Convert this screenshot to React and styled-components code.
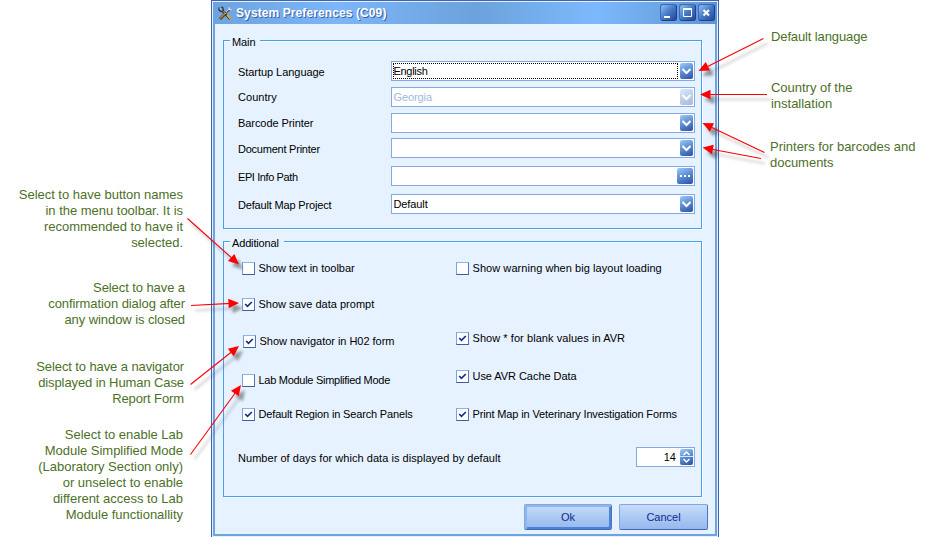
import React from "react";
import styled, { createGlobalStyle } from "styled-components";

const GlobalStyle = createGlobalStyle`
  body { margin: 0; background: #fff; }
  * { box-sizing: border-box; }
`;

const Page = styled.div`
  position: relative;
  display: flex;
  width: 937px;
  height: 537px;
  overflow: hidden;
  font-family: "Liberation Sans", Arial, sans-serif;
`;

const NoteColumn = styled.aside`
  display: flex;
  flex-direction: column;
  flex: none;
  width: ${(p) => p.$width}px;
  padding: ${(p) => p.$padding};
  align-items: ${(p) => (p.$end ? "flex-end" : "flex-start")};
  text-align: ${(p) => (p.$end ? "right" : "left")};
`;

const Note = styled.p`
  margin: ${(p) => p.$margin || "0"};
  font-size: 13px;
  line-height: 16px;
  letter-spacing: ${(p) => p.$spacing || "-0.02px"};
  color: #4d7028;
  white-space: nowrap;
`;

const Dialog = styled.main`
  display: flex;
  flex-direction: column;
  flex: none;
  width: 508px;
  height: 538px;
  border: 1px solid #3c64b4;
  background: #e4f0fe;
  padding: 1px;
`;

const Frame = styled.div`
  flex: 1;
  display: flex;
  flex-direction: column;
  padding: 0 2px 2px 2px;
  background: #6ea3de;
`;

const TitleBar = styled.header`
  display: flex;
  align-items: center;
  flex: none;
  height: 22px;
  padding: 0 2px 0 5px;
  margin: 0 -2px;
  background: linear-gradient(90deg, #6da3df 0, #7cb6f9 25%, #6ca2dc 52%, #7cb9fc 76%, #5f94d3 100%);
`;

const Title = styled.h1`
  flex: 1;
  margin: 0 0 0 3px;
  font-size: 12px;
  line-height: 20px;
  font-weight: bold;
  color: #fff;
  text-shadow: 1px 1px 0 #3a62a8;
  letter-spacing: 0.1px;
`;

const WindowButton = styled.button`
  display: flex;
  width: 17px;
  height: 17px;
  margin: 0 0 1px 2px;
  padding: 0;
  border: 1px solid #3c68b4;
  border-bottom-color: #1d3f94;
  border-right-color: #1d3f94;
  border-radius: 3px;
  background: linear-gradient(135deg, #8fc0f5, #4679c4 50%, #24489c);
`;

const Body = styled.div`
  flex: 1;
  background: #e6f2ff;
  padding: 16px 13px 0 8px;
  width: 500px;
`;

const Group = styled.section`
  width: 479px;
  height: ${(p) => p.$height}px;
  margin-bottom: 12px;
  border: 1px solid #46a0f0;
  box-shadow: 1px 1px 0 #fff, inset 0 1px 0 #f6faff;
  padding: 0 6px 0 14px;
`;

const Legend = styled.h2`
  width: ${(p) => p.$width}px;
  height: 14px;
  margin: -6px 0 0 -8px;
  padding-left: 2px;
  background: #e6f2ff;
  font-size: 11px;
  line-height: 15px;
  font-weight: normal;
  letter-spacing: ${(p) => p.$spacing};
  color: #000;
`;

const FieldRow = styled.div`
  display: flex;
  justify-content: space-between;
  height: 20px;
  margin-top: ${(p) => p.$gap}px;
`;

const Label = styled.span`
  font-size: 11px;
  line-height: ${(p) => p.$line || 22}px;
  letter-spacing: ${(p) => p.$spacing || 0}px;
  color: #000;
  white-space: pre;
`;

const Field = styled.div`
  display: flex;
  width: ${(p) => p.$width || 304}px;
  height: 20px;
  padding: 1px;
  border: 1px solid #84aae6;
  background: #fff;
`;

const Value = styled.span`
  flex: 1;
  height: 16px;
  margin-right: 2px;
  padding-right: ${(p) => (p.$right ? 1 : 0)}px;
  border: 1px ${(p) => (p.$focus ? "dotted #000" : "solid transparent")};
  font-size: 11px;
  line-height: 15px;
  letter-spacing: ${(p) => p.$spacing || 0}px;
  text-indent: -0.5px;
  text-align: ${(p) => (p.$right ? "right" : "left")};
  color: ${(p) => (p.$muted ? "#9db9e0" : "#000")};
`;

const FieldButton = styled.button`
  display: flex;
  flex: none;
  width: ${(p) => p.$width || 13}px;
  height: 16px;
  padding: 0;
  border: 0;
  border-radius: 2px;
  opacity: ${(p) => (p.$muted ? 0.4 : 1)};
  background: linear-gradient(155deg, #9ccbf8, #5a8bd0 50%, #2c50a4);
`;

const Checks = styled.div`
  display: flex;
  height: 158px;
  margin: 12px 0 0 4px;
`;

const CheckColumn = styled.div`
  width: 214px;
`;

const Check = styled.label`
  display: flex;
  height: 13px;
  margin: ${(p) => p.$gap || 0}px 0 0 ${(p) => p.$indent || 0}px;
`;

const Box = styled.span`
  display: flex;
  flex: none;
  width: 13px;
  height: 13px;
  margin-right: 3.5px;
  border: 1px solid;
  border-color: #8cb4e8 #5474bc #3c5ca8 #7aa2dc;
  background: #fff;
`;

const Footer = styled.footer`
  display: flex;
  justify-content: flex-end;
  gap: 7px;
  margin: -5px -6px 0 0;
`;

const PushButton = styled.button`
  width: ${(p) => p.$width}px;
  height: 26px;
  padding: 0;
  border: 1px solid #6e90d0;
  border-color: #80a8e4 #4c74c0 #4068b8 #80a8e4;
  border-radius: 2px;
  background: linear-gradient(#c6dcfa, #94b8ee);
  box-shadow: ${(p) => (p.$primary ? "inset 2px 2px 0 #8cb6f0, inset -2px -2px 0 #4a84d6" : "none")};
  font: 11px/24px "Liberation Sans", Arial, sans-serif;
  letter-spacing: 0;
  color: #10288c;
`;

const Overlay = styled.svg`
  position: absolute;
  inset: 0;
  pointer-events: none;
`;

const ToolsIcon = () => (
  <svg width="15" height="15" viewBox="0 0 15 15" fill="none">
    <path d="M4 4.5L12 13" stroke="#1c2026" strokeWidth="2.2" />
    <path d="M1 1.5V4L3 5.5L5.2 4.5L5 2L3.4 .8" stroke="#2a2d33" strokeWidth="1.3" />
    <path d="M1.8 2.2L4 4.5" stroke="#c8ccd0" strokeWidth="1" />
    <path d="M2 13L8 7" stroke="#593d12" strokeWidth="2.8" />
    <path d="M2.2 12.2L7.4 7" stroke="#b08432" strokeWidth="1.4" />
    <path d="M8.4 6.2L12 3" stroke="#4a4a4a" strokeWidth="1.9" />
    <path d="M8.2 5.8L12 2.2M11 1.2V3.6H13.6" stroke="#e4e7e8" strokeWidth="1" />
    <path d="M9 9L12.6 12.8" stroke="#f0a820" strokeWidth="2" />
    <path d="M4.5 4.8L8 8.3" stroke="#b9c0c4" strokeWidth=".8" />
  </svg>
);

const Glyph = ({ kind }) => (
  <svg width="15" height="15" viewBox="0 0 15 15" fill="none" stroke="#fff">
    {kind === "min" && <path d="M3 12h6" strokeWidth="2" />}
    {kind === "max" && <path d="M3.5 4v7.5h8V4M3 4h9" strokeWidth="1" />}
    {kind === "max" && <path d="M3 4h9" strokeWidth="2" />}
    {kind === "close" && <path d="M4.5 5l5.5 5.5M10 5l-5.5 5.5" strokeWidth="2.1" />}
  </svg>
);

const Chevron = () => (
  <svg width="13" height="16" viewBox="0 0 13 16" fill="none">
    <path d="M2.5 6L6.5 10L10.5 6" stroke="#fff" strokeWidth="2" />
  </svg>
);

const Dots = () => (
  <svg width="16" height="16" viewBox="0 0 16 16" fill="#fff">
    <path d="M3 7h2v2H3zM7 7h2v2H7zM11 7h2v2h-2z" />
  </svg>
);

const Spin = () => (
  <svg width="13" height="16" viewBox="0 0 13 16" fill="none" stroke="#fff">
    <path d="M3.5 6L6.5 3L9.5 6M3.5 10L6.5 13L9.5 10" strokeWidth="1.5" />
    <path d="M0 7.5H13" strokeWidth="1" stroke="#d8e8fc" />
  </svg>
);

const Option = ({ checked, gap, indent, spacing, children }) => (
  <Check $gap={gap} $indent={indent}>
    <Box>
      {checked && (
        <svg width="11" height="11" viewBox="0 0 11 11" fill="none">
          <path d="M2.2 5L4.5 7.4L8.8 3" stroke="#142c8c" strokeWidth="1.7" />
        </svg>
      )}
    </Box>
    <Label $line={13} $spacing={spacing}>{children}</Label>
  </Check>
);

const Select = ({ value, focus, muted, spacing }) => (
  <Field>
    <Value $focus={focus} $muted={muted} $spacing={spacing}>{value}</Value>
    <FieldButton $muted={muted}><Chevron /></FieldButton>
  </Field>
);

const arrows = [
  [763.5, 38.5, 698.5, 71],
  [767, 94.5, 700, 94.5],
  [764.5, 152.5, 702.5, 123],
  [761, 158.5, 702.5, 147.5],
  [187.5, 218.5, 239, 264.5],
  [191, 305.5, 239, 303],
  [190.5, 384.5, 239, 346],
  [190.5, 454.5, 241, 385],
];

const Arrow = ({ points: [x1, y1, x2, y2] }) => {
  const length = Math.hypot(x2 - x1, y2 - y1);
  const angle = (Math.atan2(y2 - y1, x2 - x1) * 180) / Math.PI;
  return (
    <g transform={`translate(${x1} ${y1}) rotate(${angle})`}>
      <path d={`M0 0H${length - 8}`} strokeWidth="1.1" />
      <path d={`M${length} 0l-10.5 -4.8v9.6z`} stroke="none" />
    </g>
  );
};

export default function App() {
  return (
    <Page>
      <GlobalStyle />
      <NoteColumn $width={211} $padding="187px 28px 0 0" $end>
        <Note>Select to have button names<br />in the menu toolbar. It is<br />recommended to have it<br />selected.</Note>
        <Note $margin="29px -2px 0 0" $spacing="-0.08px">Select to have a<br />confirmation dialog after<br />any window is closed</Note>
        <Note $margin="31px -1px 0 0" $spacing="-0.1px">Select to have a navigator<br />displayed in Human Case<br />Report Form</Note>
        <Note $margin="20px 0 0 0">Select to enable Lab<br />Module Simplified Mode<br />(Laboratory Section only)<br />or unselect to enable<br />different access to Lab<br />Module functionallity</Note>
      </NoteColumn>
      <Dialog>
        <Frame>
          <TitleBar>
            <ToolsIcon />
            <Title>System Preferences (C09)</Title>
            <WindowButton><Glyph kind="min" /></WindowButton>
            <WindowButton><Glyph kind="max" /></WindowButton>
            <WindowButton><Glyph kind="close" /></WindowButton>
          </TitleBar>
          <Body>
            <Group $height={189}>
              <Legend $width={30} $spacing="-0.1px">Main</Legend>
              <FieldRow $gap={12}><Label $spacing={-0.05}>Startup Language</Label><Select value="English" focus spacing={-0.3} /></FieldRow>
              <FieldRow $gap={6}><Label $line={20} $spacing={0.05}>Country</Label><Select value="Georgia" muted spacing={-0.1} /></FieldRow>
              <FieldRow $gap={6}><Label $line={20} $spacing={-0.07}>Barcode Printer</Label><Select /></FieldRow>
              <FieldRow $gap={5}><Label $spacing={-0.23}>Document Printer</Label><Select /></FieldRow>
              <FieldRow $gap={8}>
                <Label $spacing={-0.4}>EPI Info Path</Label>
                <Field><Value /><FieldButton $width={16}><Dots /></FieldButton></Field>
              </FieldRow>
              <FieldRow $gap={8}><Label $spacing={-0.17}>Default Map Project</Label><Select value="Default" spacing={-0.1} /></FieldRow>
            </Group>
            <Group $height={256}>
              <Legend $width={54} $spacing="-0.15px">Additional</Legend>
              <Checks>
                <CheckColumn>
                  <Option spacing={-0.02}>Show text in toolbar</Option>
                  <Option checked gap={23} spacing={0.01}>Show save data prompt</Option>
                  <Option checked gap={24} indent={1} spacing={-0.03}>Show navigator in H02 form</Option>
                  <Option gap={26} spacing={-0.28}>Lab Module Simplified Mode</Option>
                  <Option checked gap={21} spacing={-0.16}>Default Region in Search Panels</Option>
                </CheckColumn>
                <CheckColumn>
                  <Option spacing={0.06}>Show warning when big layout loading</Option>
                  <Option checked gap={57} spacing={0.06}>Show * for blank values in AVR</Option>
                  <Option checked gap={25} spacing={-0.05}>Use AVR Cache Data</Option>
                  <Option checked gap={25} spacing={-0.14}>Print Map in Veterinary Investigation Forms</Option>
                </CheckColumn>
              </Checks>
              <FieldRow $gap={27}>
                <Label $spacing={0.04}>Number of days for which data is displayed by default</Label>
                <Field $width={59}><Value $right>14</Value><FieldButton><Spin /></FieldButton></Field>
              </FieldRow>
            </Group>
            <Footer>
              <PushButton $width={88} $primary>Ok</PushButton>
              <PushButton $width={89}>Cancel</PushButton>
            </Footer>
          </Body>
        </Frame>
      </Dialog>
      <NoteColumn $width={218} $padding="29px 0 0 52px">
        <Note $spacing="-0.12px">Default language</Note>
        <Note $margin="35px 0 0 0">Country of the<br />installation</Note>
        <Note $margin="27px 0 0 -1px">Printers for barcodes and<br />documents</Note>
      </NoteColumn>
      <Overlay width="937" height="537" viewBox="0 0 937 537">
        <defs>
          <filter id="soft" filterUnits="userSpaceOnUse" x="0" y="0" width="937" height="537"><feGaussianBlur stdDeviation="1.7" /></filter>
        </defs>
        <g transform="translate(4 5)" filter="url(#soft)" stroke="#444" fill="#222" opacity=".45">
          {arrows.map((points, i) => <Arrow key={i} points={points} />)}
        </g>
        <g stroke="#f00" fill="#f00">
          {arrows.map((points, i) => <Arrow key={i} points={points} />)}
        </g>
      </Overlay>
    </Page>
  );
}
